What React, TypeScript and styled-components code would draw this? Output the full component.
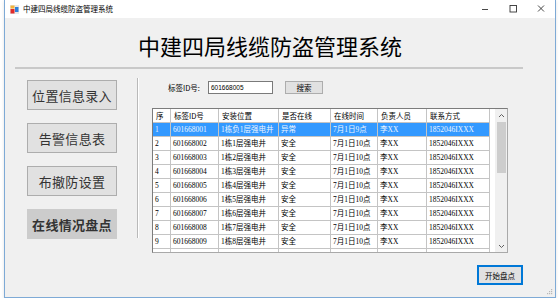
import styled, { createGlobalStyle } from "styled-components";

const GlobalStyle = createGlobalStyle`
  html, body {
    margin: 0;
    padding: 0;
    background: #ffffff;
  }
  body {
    font-family: "Noto Sans CJK SC", "Liberation Sans", sans-serif;
    color: #000;
  }
`;

const Window = styled.div`
  position: relative;
  margin-left: 4px;
  width: 552px;
  height: 298px;
  box-sizing: border-box;
  border: 1px solid #7eaad6;
  border-top: none;
  background: #f0f0f0;
  display: flex;
  flex-direction: column;
  box-shadow: 0 1px 3px rgba(0, 0, 0, 0.12);
`;

const TitleBar = styled.div`
  height: 18px;
  background: #ffffff;
  display: flex;
  align-items: center;
  padding-left: 5px;
`;

const AppIcon = styled.svg`
  width: 9px;
  height: 9px;
`;

const TitleText = styled.span`
  margin-left: 4px;
  font-size: 7.5px;
  line-height: 18px;
  flex: 1;
`;

const Controls = styled.div`
  display: flex;
  align-items: center;
  height: 18px;
`;

const CtrlBtn = styled.div`
  width: 28px;
  height: 18px;
  display: flex;
  align-items: center;
  justify-content: center;
`;

const Heading = styled.h1`
  margin: 12px 0 0;
  padding-right: 20px;
  font-size: 22px;
  line-height: 30px;
  font-weight: 400;
  text-align: center;
  color: #000;
`;

const Divider = styled.div`
  margin: 7px 0 0 10px;
  width: 508px;
  height: 2px;
  background: #c9c9c9;
`;

const Main = styled.div`
  display: flex;
  padding-left: 22px;
`;

const Nav = styled.div`
  display: flex;
  flex-direction: column;
  gap: 13px;
  padding-top: 11px;
`;

const NavButton = styled.div<{ $active?: boolean }>`
  width: 90px;
  height: 30px;
  box-sizing: border-box;
  border: 1px solid ${(p) => (p.$active ? "#cccccc" : "#adadad")};
  background: ${(p) => (p.$active ? "#cccccc" : "#e1e1e1")};
  color: #333;
  font-size: 13px;
  font-weight: ${(p) => (p.$active ? 700 : 400)};
  display: flex;
  align-items: center;
  justify-content: center;
  letter-spacing: 0.3px;
`;

const VSep = styled.div`
  margin: 9px 0 0 20px;
  width: 1px;
  height: 160px;
  background: #b9b9b9;
  border-right: 1px solid #ffffff;
`;

const Panel = styled.div`
  margin-left: 13px;
  width: 371px;
  display: flex;
  flex-direction: column;
`;

const SearchRow = styled.div`
  margin-top: 12px;
  height: 13px;
  padding-left: 16px;
  display: flex;
  align-items: center;
`;

const Label = styled.span`
  font-size: 7.5px;
  width: 40px;
`;

const Input = styled.div`
  width: 65px;
  height: 13px;
  box-sizing: border-box;
  border: 1px solid #7a7a7a;
  background: #fff;
  font-family: "Liberation Sans", sans-serif;
  font-size: 6.5px;
  line-height: 11px;
  padding-left: 2px;
`;

const SmallButton = styled.div<{ $focused?: boolean }>`
  box-sizing: border-box;
  background: #e1e1e1;
  border: 1px solid ${(p) => (p.$focused ? "#0078d7" : "#adadad")};
  box-shadow: ${(p) => (p.$focused ? "inset 0 0 0 1px #0078d7" : "none")};
  font-size: 7.5px;
  display: flex;
  align-items: center;
  justify-content: center;
  color: #000;
`;

const SearchButton = styled(SmallButton)`
  margin-left: 12px;
  width: 38px;
  height: 13px;
`;

const Table = styled.div`
  margin-top: 14px;
  width: 356px;
  height: 145px;
  box-sizing: border-box;
  border: 1px solid #7c7c7c;
  border-right-color: #a9a9a9;
  border-bottom-color: #a9a9a9;
  display: flex;
  overflow: hidden;
  background: #fff;
`;

const Grid = styled.div`
  flex: 1;
  display: grid;
  grid-template-columns: 18px 48px 60px 52px 47px 49px 63px;
  grid-auto-rows: 14px;
  align-content: start;
  overflow: hidden;
`;

const Cell = styled.div<{ $selected?: boolean; $head?: boolean }>`
  box-sizing: border-box;
  border-right: 1px solid #c4c4c4;
  border-bottom: 1px solid #c4c4c4;
  padding-left: ${(p) => (p.$head ? 3 : 2)}px;
  background: ${(p) => (p.$selected ? "#3399ff" : "#ffffff")};
  color: ${(p) => (p.$selected ? "#eef6ff" : "#000")};
  font-family: ${(p) =>
    p.$head
      ? `"Noto Sans CJK SC", sans-serif`
      : `"Liberation Serif", "Noto Sans CJK SC", serif`};
  font-size: 7.5px;
  line-height: 13px;
  white-space: nowrap;
  overflow: hidden;
`;

const ScrollBar = styled.div`
  width: 12px;
  margin-left: 5px;
  background: #f0f0f0;
  display: flex;
  flex-direction: column;
  align-items: center;
`;

const ScrollArrow = styled.div`
  height: 12px;
  width: 12px;
  display: flex;
  align-items: center;
  justify-content: center;
`;

const Thumb = styled.div`
  margin-top: 1px;
  width: 9px;
  height: 51px;
  background: #cdcdcd;
`;

const ScrollSpace = styled.div`
  flex: 1;
`;

const Footer = styled.div`
  margin-top: 12px;
  display: flex;
  justify-content: flex-end;
`;

const StartButton = styled(SmallButton)`
  width: 46px;
  height: 20px;
`;

const Grip = styled.svg`
  position: absolute;
  right: 2px;
  bottom: 2px;
  width: 6px;
  height: 6px;
`;

const headers = ["序", "标签ID号", "安装位置", "是否在线", "在线时间", "负责人员", "联系方式"];

const rows = Array.from({ length: 9 }, (_, i) => {
  const n = i + 1;
  return [
    String(n),
    `6016680${String(n).padStart(2, "0")}`,
    n === 1 ? "1栋负1层强电井" : `1栋${n - 1}层强电井`,
    n === 1 ? "异常" : "安全",
    n === 1 ? "7月1日9点" : "7月1日10点",
    "李XX",
    "1852046IXXX",
  ];
});

// the tenth row only shows its top edge below the ninth
const partialRow = headers.map(() => "");

const navItems = ["位置信息录入", "告警信息表", "布撤防设置", "在线情况盘点"];

function App() {
  return (
    <>
      <GlobalStyle />
      <Window>
        <TitleBar>
          <AppIcon viewBox="0 0 9 9">
            <rect x="0" y="0" width="9" height="9" fill="#e8e8e8" />
            <rect x="0.5" y="0.5" width="4" height="3" fill="#f3b23a" />
            <rect x="0.5" y="4" width="4" height="4.5" fill="#e02a2a" />
            <rect x="5" y="2" width="3.5" height="5" fill="#2f7fd8" />
          </AppIcon>
          <TitleText>中建四局线缆防盗管理系统</TitleText>
          <Controls>
            <CtrlBtn>
              <svg width="10" height="10" viewBox="0 0 10 10">
                <line x1="2" y1="5.5" x2="8" y2="5.5" stroke="#333" strokeWidth="0.9" />
              </svg>
            </CtrlBtn>
            <CtrlBtn>
              <svg width="10" height="10" viewBox="0 0 10 10">
                <rect x="2" y="1.5" width="6.5" height="6.5" fill="none" stroke="#333" strokeWidth="0.9" />
              </svg>
            </CtrlBtn>
            <CtrlBtn>
              <svg width="10" height="10" viewBox="0 0 10 10">
                <path d="M2 1.5 L8 7.5 M8 1.5 L2 7.5" stroke="#333" strokeWidth="0.9" />
              </svg>
            </CtrlBtn>
          </Controls>
        </TitleBar>

        <Heading>中建四局线缆防盗管理系统</Heading>
        <Divider />

        <Main>
          <Nav>
            {navItems.map((t, i) => (
              <NavButton key={t} $active={i === navItems.length - 1}>
                {t}
              </NavButton>
            ))}
          </Nav>
          <VSep />
          <Panel>
            <SearchRow>
              <Label>标签ID号:</Label>
              <Input>601668005</Input>
              <SearchButton>搜索</SearchButton>
            </SearchRow>

            <Table>
              <Grid>
                {headers.map((h) => (
                  <Cell key={h} $head>
                    {h}
                  </Cell>
                ))}
                {rows.map((r, ri) =>
                  r.map((c, ci) => (
                    <Cell key={`${ri}-${ci}`} $selected={ri === 0}>
                      {c}
                    </Cell>
                  ))
                )}
                {partialRow.map((c, ci) => (
                  <Cell key={`p-${ci}`}>{c}</Cell>
                ))}
              </Grid>
              <ScrollBar>
                <ScrollArrow>
                  <svg width="7" height="5" viewBox="0 0 7 5">
                    <path d="M1 4 L3.5 1.5 L6 4" fill="none" stroke="#606060" strokeWidth="1" />
                  </svg>
                </ScrollArrow>
                <Thumb />
                <ScrollSpace />
                <ScrollArrow>
                  <svg width="7" height="5" viewBox="0 0 7 5">
                    <path d="M1 1 L3.5 3.5 L6 1" fill="none" stroke="#606060" strokeWidth="1" />
                  </svg>
                </ScrollArrow>
              </ScrollBar>
            </Table>

            <Footer>
              <StartButton $focused>开始盘点</StartButton>
            </Footer>
          </Panel>
        </Main>

        <Grip viewBox="0 0 6 6">
          <rect x="4" y="0" width="1.2" height="1.2" fill="#b8b8b8" />
          <rect x="2" y="2" width="1.2" height="1.2" fill="#b8b8b8" />
          <rect x="4" y="2" width="1.2" height="1.2" fill="#b8b8b8" />
          <rect x="0" y="4" width="1.2" height="1.2" fill="#b8b8b8" />
          <rect x="2" y="4" width="1.2" height="1.2" fill="#b8b8b8" />
          <rect x="4" y="4" width="1.2" height="1.2" fill="#b8b8b8" />
        </Grip>
      </Window>
    </>
  );
}

export default App;
